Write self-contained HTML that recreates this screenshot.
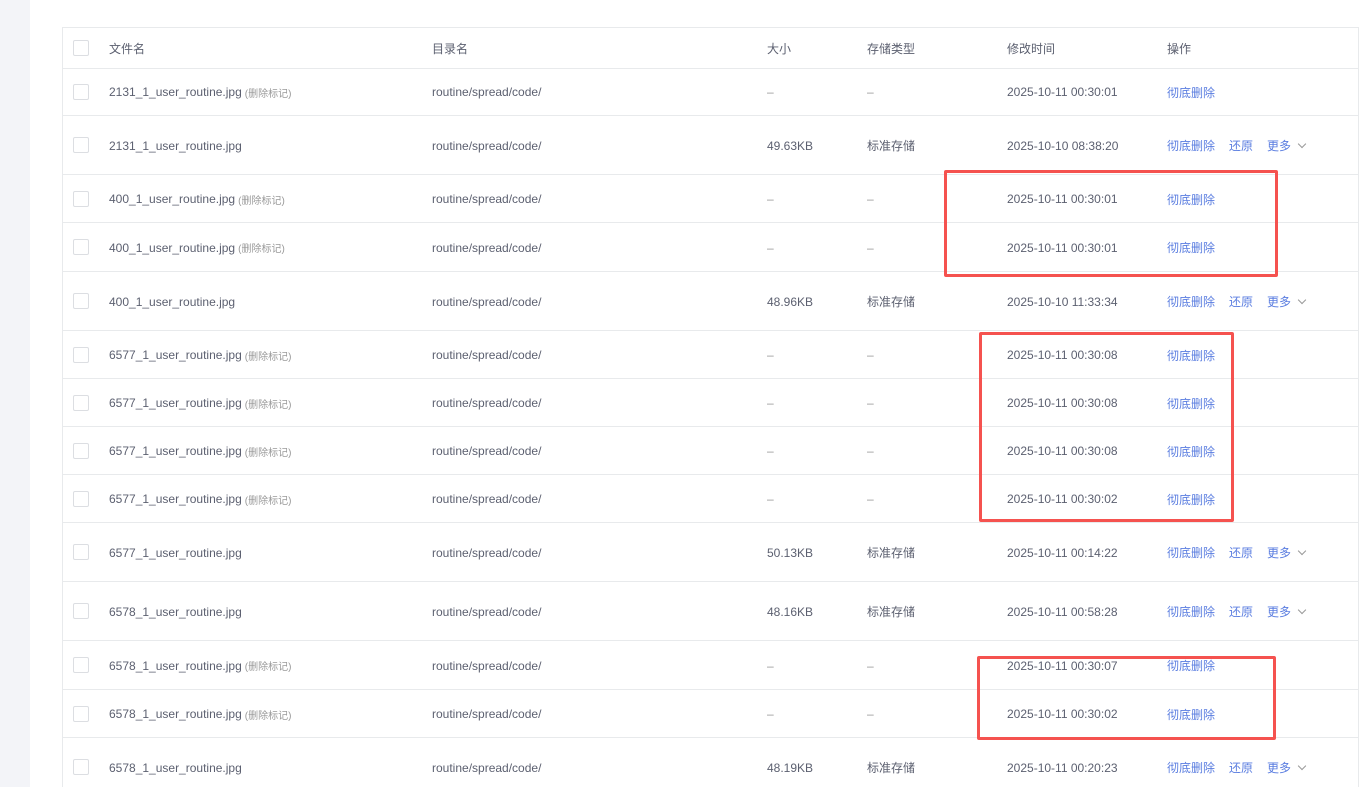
<!DOCTYPE html><html><head><meta charset="utf-8"><style>
html,body{margin:0;width:1365px;height:787px;overflow:hidden}
body{background:#fff;font-family:"Liberation Sans","Noto Sans CJK SC",sans-serif;font-size:12px;color:#5c6070;position:relative}
.side{position:absolute;left:0;top:0;width:30px;height:787px;background:#f3f4f8}
.tbl{position:absolute;left:62px;top:27px;width:1295px;height:760px;border-left:1px solid #e8eaec;border-top:1px solid #e8eaec;border-right:1px solid #e8eaec}
.row{position:absolute;left:62px;width:1296px;border-bottom:1px solid #e8eaec}
.row>span{position:absolute;top:1px;bottom:0;display:flex;align-items:center;white-space:nowrap}
.cb{position:absolute;left:11px;top:50%;margin-top:-8px;width:14px;height:14px;border:1px solid #dcdee2;border-radius:2px;background:#fff}
.tag{color:#999;font-size:10px;margin-left:3px}
.d{color:#999}
a{color:#5a7de0;text-decoration:none}
.chev{display:inline-block;width:5px;height:5px;border-right:1px solid #999;border-bottom:1px solid #999;transform:rotate(45deg);margin-left:8px;position:relative;top:-2px}
.red{position:absolute;border:3px solid #f5524f;border-radius:2px}
</style></head><body>
<div class="side"></div>
<div class="tbl"></div>
<div class="row h" style="top:27px;height:41px"><div class="cb"></div><span style="left:47px">文件名</span><span style="left:370px">目录名</span><span style="left:705px">大小</span><span style="left:805px">存储类型</span><span style="left:945px">修改时间</span><span style="left:1105px">操作</span></div>
<div id="rows"></div>
<script>
var R=[
[68,48,"2131_1_user_routine.jpg",1,"","","2025-10-11 00:30:01"],
[116,59,"2131_1_user_routine.jpg",0,"49.63KB","标准存储","2025-10-10 08:38:20"],
[175,48,"400_1_user_routine.jpg",1,"","","2025-10-11 00:30:01"],
[223,49,"400_1_user_routine.jpg",1,"","","2025-10-11 00:30:01"],
[272,59,"400_1_user_routine.jpg",0,"48.96KB","标准存储","2025-10-10 11:33:34"],
[331,48,"6577_1_user_routine.jpg",1,"","","2025-10-11 00:30:08"],
[379,48,"6577_1_user_routine.jpg",1,"","","2025-10-11 00:30:08"],
[427,48,"6577_1_user_routine.jpg",1,"","","2025-10-11 00:30:08"],
[475,48,"6577_1_user_routine.jpg",1,"","","2025-10-11 00:30:02"],
[523,59,"6577_1_user_routine.jpg",0,"50.13KB","标准存储","2025-10-11 00:14:22"],
[582,59,"6578_1_user_routine.jpg",0,"48.16KB","标准存储","2025-10-11 00:58:28"],
[641,49,"6578_1_user_routine.jpg",1,"","","2025-10-11 00:30:07"],
[690,48,"6578_1_user_routine.jpg",1,"","","2025-10-11 00:30:02"],
[738,59,"6578_1_user_routine.jpg",0,"48.19KB","标准存储","2025-10-11 00:20:23"]];
var h="";R.forEach(function(r){var del=r[3];
h+='<div class="row" style="top:'+r[0]+'px;height:'+(r[1]-1)+'px"><div class="cb"></div><span style="left:47px">'+r[2]+(del?'<i class="tag" style="font-style:normal">(删除标记)</i>':'')+'</span><span style="left:370px">routine/spread/code/</span><span style="left:705px"'+(del?' class="d">–':'>'+r[4])+'</span><span style="left:805px"'+(del?' class="d">–':'>'+r[5])+'</span><span style="left:945px">'+r[6]+'</span><span style="left:1105px"><a>彻底删除</a>'+(del?'':'<a style="margin-left:14px">还原</a><a style="margin-left:14px">更多</a><i class="chev"></i>')+'</span></div>';});
document.getElementById("rows").innerHTML=h;
</script>
<div class="red" style="left:944px;top:170px;width:328px;height:101px"></div>
<div class="red" style="left:979px;top:332px;width:249px;height:184px"></div>
<div class="red" style="left:977px;top:656px;width:293px;height:78px"></div>
</body></html>
